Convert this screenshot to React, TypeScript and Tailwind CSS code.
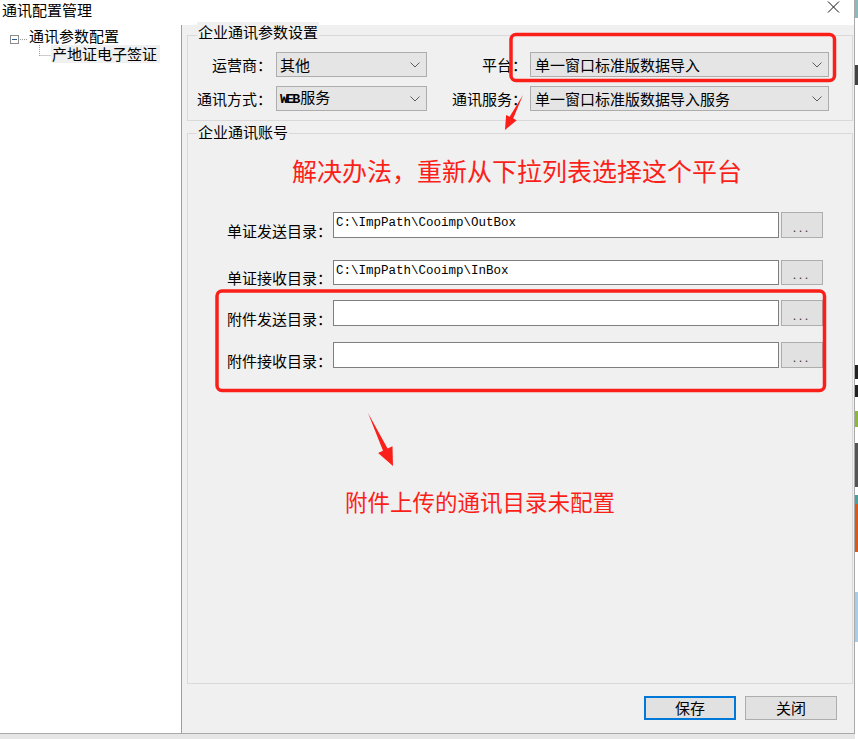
import React from "react";

const RED = "#fb1f1a";

function Chevron() {
  return (
    <svg width="10" height="6" viewBox="0 0 10 6" className="shrink-0">
      <polyline points="0.5,0.5 5,5 9.5,0.5" fill="none" stroke="#5c5c5c" strokeWidth="1" />
    </svg>
  );
}

function Combo({ children, pad }: { children: React.ReactNode; pad: string }) {
  return (
    <div
      className={`flex h-[25px] items-center justify-between border border-[#adadad] bg-[#e5e5e5] ${pad} text-[15px] leading-[20px]`}
    >
      <span>{children}</span>
      <Chevron />
    </div>
  );
}

function PathRow({ label, value, mt, h }: { label: string; value: string; mt: string; h: string }) {
  return (
    <div className={`flex ${mt} ${h}`}>
      <div className="-mb-[3px] w-[145px] self-end pr-[1px] text-right text-[15px] leading-[20px]">{label}</div>
      <div className="flex w-[446px] items-start border border-[#7f7f7f] bg-white pl-[2px] pt-[3px] font-['Liberation_Mono',monospace] text-[12.5px] leading-[15px]">
        {value}
      </div>
      <button
        type="button"
        className="ml-[2px] flex w-[42px] items-center justify-center border border-[#adadad] bg-[#e1e1e1] pt-[3px] text-[11px] leading-[12px] tracking-[3px] text-[#333]"
      >
        ...
      </button>
    </div>
  );
}

function Tree() {
  return (
    <div className="w-[182px] shrink-0 border-r border-[#a0a0a0] bg-white pt-[2px] text-[15px]">
      <div className="flex h-[18px] items-start pl-[10px] leading-[18px]">
        <svg width="19" height="10" viewBox="0 0 19 10" className="mt-[8px] shrink-0">
          <rect x="0.5" y="0.5" width="8" height="8" fill="#fff" stroke="#8c8c8c" />
          <line x1="2" y1="4.5" x2="7" y2="4.5" stroke="#2a5a94" />
          <line x1="10" y1="4.5" x2="18" y2="4.5" stroke="#9a9a9a" strokeDasharray="1 1" />
        </svg>
        <span>通讯参数配置</span>
      </div>
      <div className="flex h-[18px] items-start pl-[39px] leading-[18px]">
        <svg width="12" height="18" viewBox="0 0 12 18" className="shrink-0">
          <line x1="0.5" y1="0" x2="0.5" y2="11" stroke="#9a9a9a" strokeDasharray="1 1" />
          <line x1="0.5" y1="10.5" x2="12" y2="10.5" stroke="#9a9a9a" strokeDasharray="1 1" />
        </svg>
        <span className="bg-[#f0f0f0] pl-[1px] pr-[3px]">产地证电子签证</span>
      </div>
    </div>
  );
}

export default function App() {
  return (
    <div className="relative flex h-[739px] w-[858px] overflow-hidden bg-[#e6e6e6] font-['Noto_Sans_CJK_SC',sans-serif] text-black">
      <div className="flex h-[734px] w-[855px] shrink-0 flex-col border-b border-r border-[#a9a9a9] bg-white">
        {/* title bar */}
        <div className="flex h-[25px] shrink-0 items-start justify-between bg-white">
          <span className="pl-[2px] text-[15px] leading-[19px]">通讯配置管理</span>
          <svg className="mr-[14px] mt-[1px]" width="13" height="12" viewBox="0 0 13 12">
            <path d="M1 0.5 L12 11.5 M12 0.5 L1 11.5" stroke="#111" strokeWidth="1" />
          </svg>
        </div>

        <div className="flex min-h-0 flex-1">
          <Tree />

          <div className="flex flex-1 flex-col bg-[#f0f0f0]">
            {/* 企业通讯参数设置 */}
            <div className="ml-[5px] mr-[1px] mt-[10px] h-[86px] border border-[#d9d9d9]">
              <div className="-mt-[14px] ml-[9px] w-fit bg-[#f0f0f0] px-[1px] text-[15px] leading-[20px]">企业通讯参数设置</div>
              <div className="mt-[10px] grid grid-cols-[88px_151px_103px_299px] items-center gap-y-[9px] text-[15px] leading-[20px]">
                <div className="pr-[4px] text-right">运营商：</div>
                <Combo pad="pl-[3px] pr-[6px]">其他</Combo>
                <div className="pr-[3px] text-right">平台：</div>
                <Combo pad="pl-[4px] pr-[6px]">单一窗口标准版数据导入</Combo>

                <div className="pr-[4px] text-right">通讯方式：</div>
                <Combo pad="pl-[3px] pr-[6px]">
                  <span className="font-['Liberation_Mono',monospace] text-[13.5px] font-bold tracking-[-2px]">WEB</span>
                  <span className="pl-[2px]">服务</span>
                </Combo>
                <div className="pr-[3px] text-right">通讯服务：</div>
                <Combo pad="pl-[4px] pr-[6px]">单一窗口标准版数据导入服务</Combo>
              </div>
            </div>

            {/* 企业通讯账号 */}
            <div className="ml-[5px] mr-[1px] mt-[12px] h-[551px] border border-[#d9d9d9]">
              <div className="-mt-[12px] ml-[9px] w-fit bg-[#f0f0f0] px-[1px] text-[15px] leading-[20px]">企业通讯账号</div>
              <div className="ml-[104px] mt-[13px] text-[25px] leading-[30px] text-[#fb1f1a]">解决办法，重新从下拉列表选择这个平台</div>

              <PathRow label="单证发送目录：" value="C:\ImpPath\Cooimp\OutBox" mt="mt-[27px]" h="h-[26px]" />
              <PathRow label="单证接收目录：" value="C:\ImpPath\Cooimp\InBox" mt="mt-[22px]" h="h-[25px]" />
              <PathRow label="附件发送目录：" value="" mt="mt-[15px]" h="h-[26px]" />
              <PathRow label="附件接收目录：" value="" mt="mt-[16px]" h="h-[26px]" />

              <div className="ml-[157px] mt-[118px] text-[22.5px] leading-[30px] text-[#fb1f1a]">附件上传的通讯目录未配置</div>
            </div>

            {/* buttons */}
            <div className="mr-[17px] mt-[12px] flex justify-end gap-[9px]">
              <button type="button" className="h-[24px] w-[92px] border-2 border-[#0078d7] bg-[#e1e1e1] text-[15px] leading-[18px]">
                保存
              </button>
              <button type="button" className="h-[24px] w-[92px] border border-[#adadad] bg-[#e1e1e1] text-[15px] leading-[18px]">
                关闭
              </button>
            </div>
          </div>
        </div>
      </div>

      {/* background window peeking at the right edge */}
      <div className="flex w-[3px] flex-col bg-white">
        <div className="h-[18px] bg-[#8fb8bd]" />
        <div className="mt-[47px] h-[20px] bg-[#444]" />
        <div className="mt-[280px] h-[14px] bg-[#222]" />
        <div className="mt-[6px] h-[12px] bg-[#222]" />
        <div className="mt-[14px] h-[16px] bg-[#8ab83a]" />
        <div className="mt-[16px] h-[44px] bg-[#555]" />
        <div className="mt-[8px] h-[9px] bg-[#4aa0a0]" />
        <div className="h-[48px] bg-[#d85a1a]" />
        <div className="mt-[40px] h-[50px] bg-[#a9cde8]" />
      </div>

      {/* red annotations */}
      <svg className="pointer-events-none absolute left-0 top-0" width="858" height="739" viewBox="0 0 858 739">
        <rect x="511" y="34.5" width="323.5" height="46" rx="5" fill="none" stroke={RED} strokeWidth="3.5" />
        <rect x="217" y="291" width="607.5" height="99.5" rx="5" fill="none" stroke={RED} strokeWidth="3.5" />
        <polygon points="523,95 513.2,118.5 516.7,120.3 505,130 506.1,114.9 509.6,116.7" fill={RED} />
        <polygon points="368,413 387.6,448.6 392.5,446.3 393,466 378.1,453.1 383,450.8" fill={RED} />
      </svg>
    </div>
  );
}
